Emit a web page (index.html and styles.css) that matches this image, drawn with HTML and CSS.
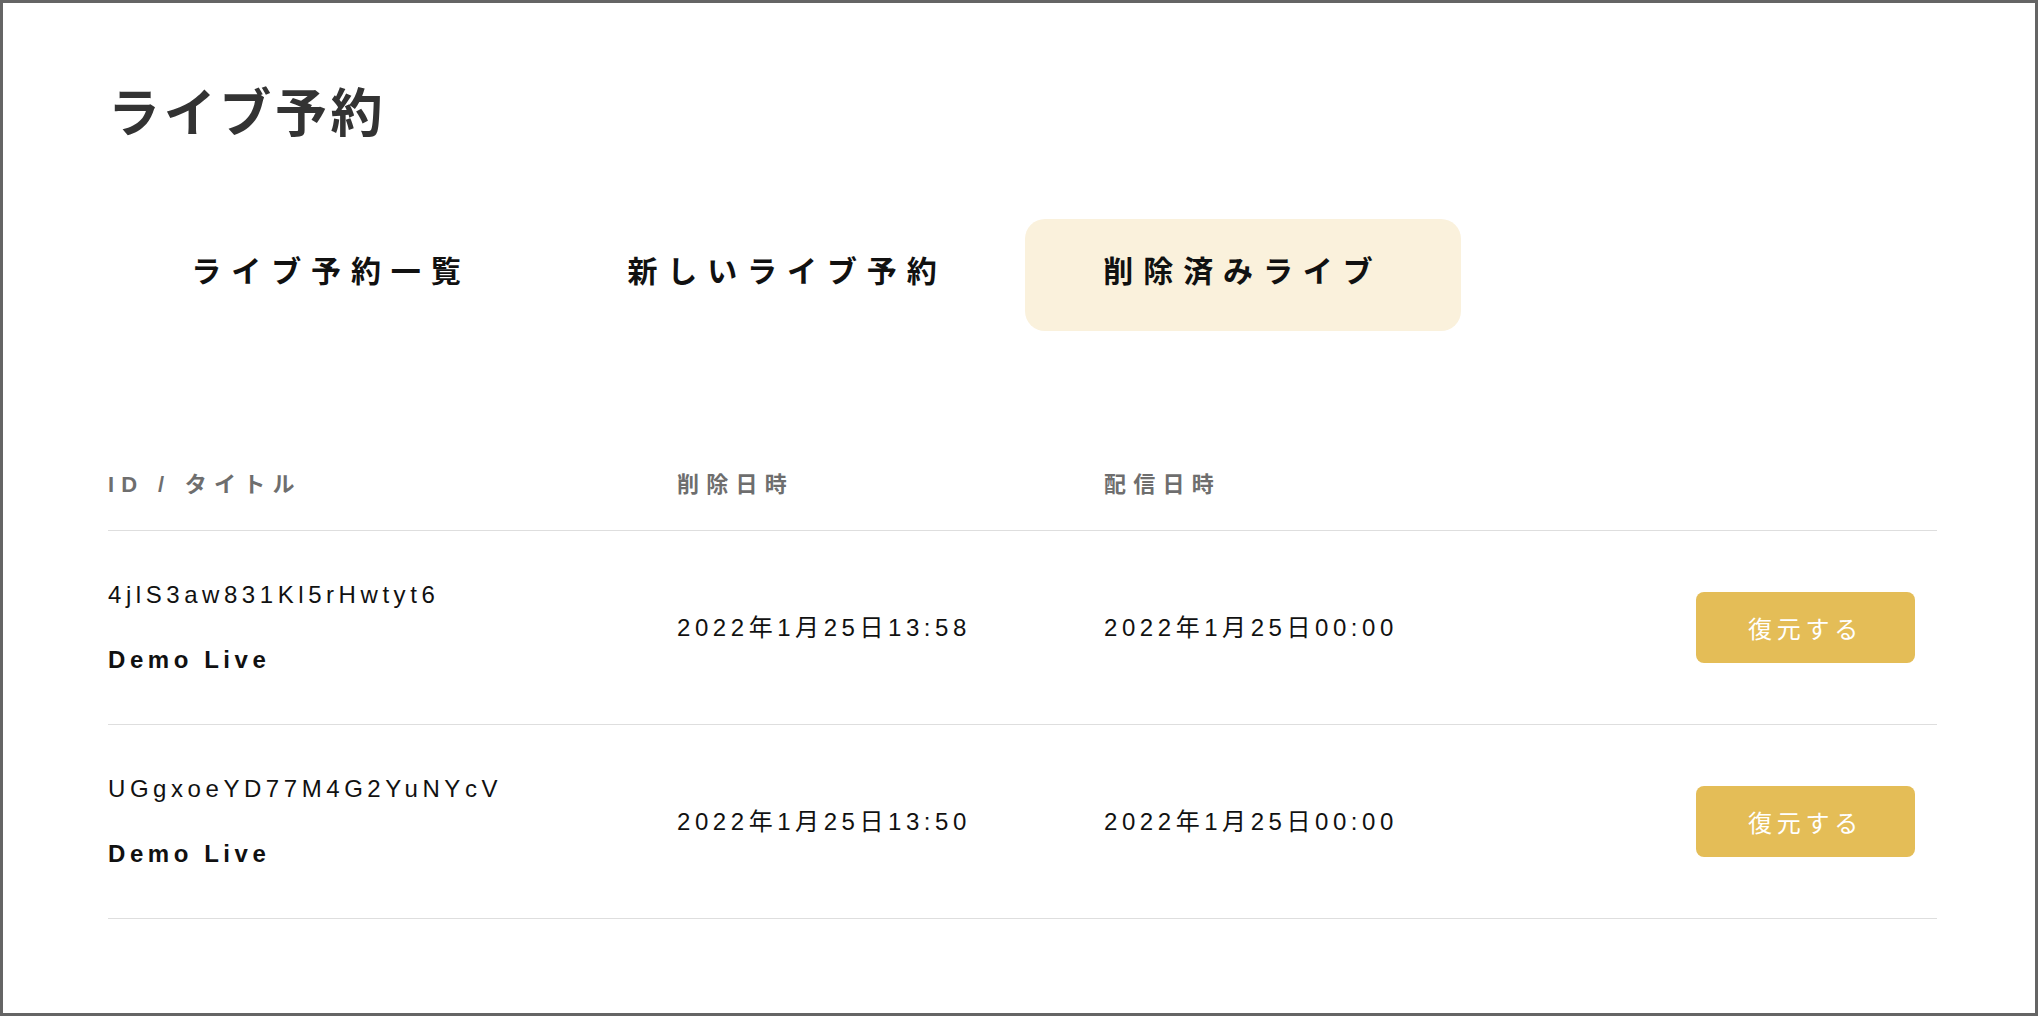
FILE: index.html
```html
<!DOCTYPE html>
<html lang="ja">
<head>
    <meta charset="UTF-8">
    <meta name="viewport" content="width=device-width, initial-scale=1.0">
    <title>ライブ予約 - 削除済みライブ</title>
    <link rel="stylesheet" href="styles.css">
</head>
<body>
    <div class="page">
        <h1 class="page-title">ライブ予約</h1>

        <nav class="tabs">
            <a class="tab" href="#">ライブ予約一覧</a>
            <a class="tab" href="#">新しいライブ予約</a>
            <a class="tab active" href="#">削除済みライブ</a>
        </nav>

        <div class="live-table">
            <div class="row head">
                <div>ID / タイトル</div>
                <div>削除日時</div>
                <div>配信日時</div>
                <div></div>
            </div>

            <div class="row">
                <div class="cell-title">
                    <p class="live-id">4jlS3aw831Kl5rHwtyt6</p>
                    <p class="live-name">Demo Live</p>
                </div>
                <div class="cell-date">2022年1月25日13:58</div>
                <div class="cell-date">2022年1月25日00:00</div>
                <div class="cell-action"><button class="restore">復元する</button></div>
            </div>

            <div class="row">
                <div class="cell-title">
                    <p class="live-id">UGgxoeYD77M4G2YuNYcV</p>
                    <p class="live-name">Demo Live</p>
                </div>
                <div class="cell-date">2022年1月25日13:50</div>
                <div class="cell-date">2022年1月25日00:00</div>
                <div class="cell-action"><button class="restore">復元する</button></div>
            </div>
        </div>
    </div>
</body>
</html>
```

FILE: styles.css
```css
body {
    margin: 0;
    font-family: "Liberation Sans", "Noto Sans CJK JP", sans-serif;
    color: #111;
    background-color: white;
}
.page {
    height: 100vh;
    box-sizing: border-box;
    border: 3px solid #656565;
    padding: 0 98px 0 105px;
    overflow: hidden;
}
.page-title {
    margin: 0;
    padding-top: 85px;
    font-size: 52px;
    line-height: 1;
    letter-spacing: 0.07em;
    font-weight: bold;
    color: #333;
}

/* タブ */
.tabs {
    display: flex;
    gap: 20px;
    margin: 79px 0 0 5px;
}
.tab {
    width: 436px;
    height: 112px;
    box-sizing: border-box;
    padding-bottom: 12px;
    display: flex;
    align-items: center;
    justify-content: center;
    border-radius: 20px;
    font-size: 30px;
    font-weight: bold;
    letter-spacing: 0.33em;
    color: #111;
    text-decoration: none;
}
.tab.active {
    background-color: #faf1dc;
}

/* 一覧 */
.live-table {
    margin-top: 139px;
}
.row {
    display: grid;
    grid-template-columns: 569px 427px 1fr auto;
    align-items: center;
    border-bottom: 1px solid #dedede;
    padding: 48px 0;
    font-size: 24px;
    line-height: 32px;
    letter-spacing: 0.19em;
}
.row.head {
    padding: 0 0 30px;
    font-size: 22px;
    line-height: 30px;
    font-weight: bold;
    letter-spacing: 0.33em;
    color: #6e6e6e;
}
.live-id,
.live-name {
    margin: 0;
}
.live-name {
    margin-top: 33px;
    font-weight: bold;
}
.cell-action {
    padding-right: 22px;
}
.restore {
    width: 219px;
    height: 71px;
    border: none;
    border-radius: 8px;
    background-color: #e4bd57;
    color: white;
    font-family: inherit;
    font-size: 24px;
    letter-spacing: 0.2em;
    cursor: pointer;
}
```
